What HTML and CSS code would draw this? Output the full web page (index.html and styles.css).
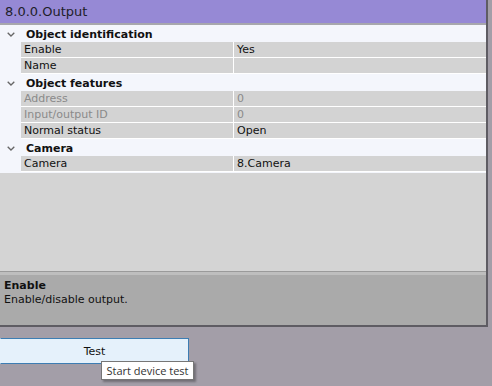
FILE: index.html
```html
<!DOCTYPE html>
<html lang="en">
<head>
    <meta charset="UTF-8">
    <meta name="viewport" content="width=device-width, initial-scale=1.0">
    <title>8.0.0.Output</title>
    <link rel="stylesheet" href="styles.css">
</head>
<body>
    <div class="panel">
        <div class="title">8.0.0.Output</div>

        <div class="props">
            <div class="group-head">
                <span class="chev"><svg width="8" height="5" viewBox="0 0 8 5"><polyline points="0.7,0.7 4,4 7.3,0.7" fill="none" stroke="#666" stroke-width="1.3"/></svg></span>
                <span class="group-label">Object identification</span>
            </div>
            <div class="row"><span class="cell">Enable</span><span class="cell">Yes</span></div>
            <div class="row"><span class="cell">Name</span><span class="cell"></span></div>

            <div class="group-head">
                <span class="chev"><svg width="8" height="5" viewBox="0 0 8 5"><polyline points="0.7,0.7 4,4 7.3,0.7" fill="none" stroke="#666" stroke-width="1.3"/></svg></span>
                <span class="group-label">Object features</span>
            </div>
            <div class="row disabled"><span class="cell">Address</span><span class="cell">0</span></div>
            <div class="row disabled"><span class="cell">Input/output ID</span><span class="cell">0</span></div>
            <div class="row"><span class="cell">Normal status</span><span class="cell">Open</span></div>

            <div class="group-head">
                <span class="chev"><svg width="8" height="5" viewBox="0 0 8 5"><polyline points="0.7,0.7 4,4 7.3,0.7" fill="none" stroke="#666" stroke-width="1.3"/></svg></span>
                <span class="group-label">Camera</span>
            </div>
            <div class="row"><span class="cell">Camera</span><span class="cell">8.Camera</span></div>
        </div>

        <div class="filler"></div>

        <div class="desc">
            <div class="desc-title">Enable</div>
            <div class="desc-text">Enable/disable output.</div>
        </div>
    </div>

    <div class="actions">
        <button class="test-btn">Test</button>
    </div>

    <div class="tooltip">Start device test</div>
</body>
</html>
```

FILE: styles.css
```css
body {
    margin: 0;
    padding: 0;
    width: 492px;
    height: 386px;
    overflow: hidden;
    background-color: #a39ea8;
    font-family: 'DejaVu Sans', Verdana, sans-serif;
    font-size: 11px;
    color: #111;
}

.panel {
    width: 486px;
    height: 325px;
    display: flex;
    flex-direction: column;
    border-right: 2px solid #5e5c63;
    border-bottom: 2px solid #5e5c63;
    background-color: #d3d3d3;
}

.title {
    height: 23px;
    line-height: 23px;
    padding-left: 5px;
    font-size: 13px;
    color: #1e1e2a;
    background-color: #9689d5;
    border-bottom: 2px solid #a7a7ad;
}

/* property grid */
.props {
    background-color: #f4f6fc;
    padding-bottom: 1px;
}

.group-head {
    display: flex;
    align-items: center;
    height: 16px;
    font-weight: bold;
    padding-top: 1px;
}

.chev {
    width: 21px;
    display: flex;
    justify-content: center;
    padding-top: 1px;
}

.group-label {
    padding-left: 5px;
}

.row {
    display: grid;
    grid-template-columns: 212px 1fr;
    column-gap: 1px;
    margin-left: 21px;
    height: 15px;
    border-bottom: 1px solid #ffffff;
    background-color: #ffffff;
}

.cell {
    background-color: #d3d3d3;
    line-height: 15px;
    padding-left: 3px;
    white-space: nowrap;
}

.row.disabled .cell {
    color: #8a8a8a;
}

.filler {
    flex: 1;
    background-color: #d4d4d4;
}

.desc {
    height: 47px;
    padding: 6px 4px 0;
    background-color: #aaaaaa;
    border-top: 1px solid #9a9a9a;
    box-shadow: inset 0 3px 0 #bebebe;
    line-height: 14px;
}

.desc-title {
    font-weight: bold;
    padding-top: 1px;
}

/* bottom buttons */
.actions {
    padding-top: 11px;
}

.test-btn {
    display: block;
    width: 189px;
    height: 26px;
    margin: 0;
    padding: 0;
    font-family: 'DejaVu Sans', Verdana, sans-serif;
    font-size: 11px;
    color: #111;
    background-color: #e5f1fb;
    border: 1px solid #3d7db3;
    border-left-color: #e5f1fb;
}

.tooltip {
    position: absolute;
    left: 101px;
    top: 361px;
    width: 91px;
    height: 17px;
    line-height: 17px;
    text-align: center;
    font-family: 'Open Sans', 'Segoe UI', sans-serif;
    font-size: 11px;
    color: #333;
    background-color: #ffffff;
    border: 1px solid #767676;
    box-shadow: 2px 2px 2px rgba(0, 0, 0, 0.3);
}
```
